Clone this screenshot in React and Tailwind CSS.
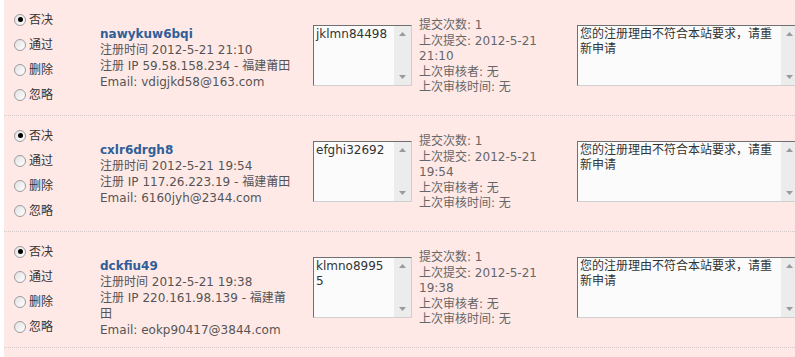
import React from "react";

const rows = [
  {
    name: "nawykuw6bqi",
    time: "2012-5-21 21:10",
    ip: "59.58.158.234",
    email: "vdigjkd58@163.com",
    reason: "jklmn84498",
    last: "2012-5-21 21:10",
  },
  {
    name: "cxlr6drgh8",
    time: "2012-5-21 19:54",
    ip: "117.26.223.19",
    email: "6160jyh@2344.com",
    reason: "efghi32692",
    last: "2012-5-21 19:54",
  },
  {
    name: "dckfiu49",
    time: "2012-5-21 19:38",
    ip: "220.161.98.139",
    email: "eokp90417@3844.com",
    reason: "klmno89955",
    last: "2012-5-21 19:38",
  },
];

const choices = ["否决", "通过", "删除", "忽略"];

function Radio({ checked, label }) {
  return (
    <label className="flex h-[25px] items-center gap-[3px] text-[12px] text-[#333]">
      <span className="flex h-[12px] w-[12px] items-center justify-center rounded-full border border-[#9c9c9c] bg-gradient-to-br from-[#e2e2e2] to-white">
        {checked && <span className="h-[5px] w-[5px] rounded-full bg-black" />}
      </span>
      <span>{label}</span>
    </label>
  );
}

// fake textarea with an old-style scrollbar
function TextBox({ value, width }) {
  return (
    <div
      className={`mt-[25px] flex h-[61px] shrink-0 border border-t-[#707070] border-l-[#707070] border-b-[#cfcfcf] border-r-[#cfcfcf] bg-[#fbfbfb] ${width}`}
    >
      <textarea
        readOnly
        value={value}
        className="min-w-0 flex-1 resize-none overflow-hidden bg-transparent pl-[2px] pr-[5px] pt-[1px] text-[12px] leading-[15px] text-[#333] outline-none"
      />
      <div className="flex w-[17px] shrink-0 flex-col items-center justify-between bg-[#ececec] py-[6px]">
        <svg width="7" height="4" viewBox="0 0 7 4">
          <path d="M0 4 L3.5 0 L7 4 Z" fill="#9a9a9a" />
        </svg>
        <svg width="7" height="4" viewBox="0 0 7 4">
          <path d="M0 0 L3.5 4 L7 0 Z" fill="#9a9a9a" />
        </svg>
      </div>
    </div>
  );
}

function Row({ r }) {
  return (
    <div className="flex h-[116px] items-start border-b border-dotted border-[#d3c9c9]">
      {/* 审核操作 */}
      <div className="w-[96px] shrink-0 pl-[10px] pt-[7px]">
        {choices.map((c, i) => (
          <Radio key={c} label={c} checked={i === 0} />
        ))}
      </div>

      {/* 用户信息 */}
      <div className="w-[194px] shrink-0 pt-[26px] text-[12px] leading-[16px] text-[#555]">
        <div className="font-bold text-[#2f5f98]">{r.name}</div>
        <div>注册时间 {r.time}</div>
        <div>注册 IP {r.ip} - 福建莆田</div>
        <div>Email: {r.email}</div>
      </div>

      <div className="ml-[19px]">
        <TextBox value={r.reason} width="w-[99px]" />
      </div>

      {/* 提交记录 */}
      <div className="ml-[7px] w-[145px] shrink-0 pt-[18px] text-[12px] leading-[15.5px] text-[#666]">
        <div>提交次数: 1</div>
        <div>上次提交: {r.last}</div>
        <div>上次审核者: 无</div>
        <div>上次审核时间: 无</div>
      </div>

      <div className="ml-[13px]">
        <TextBox value="您的注册理由不符合本站要求，请重新申请" width="w-[222px]" />
      </div>
    </div>
  );
}

export default function App() {
  return (
    <div className="h-[357px] w-[795px] overflow-hidden bg-white pl-[4px] font-['DejaVu_Sans','Noto_Sans_CJK_SC',sans-serif]">
      <div className="h-full bg-[#ffe9e7]">
        {rows.map((r) => (
          <Row key={r.name} r={r} />
        ))}
      </div>
    </div>
  );
}
